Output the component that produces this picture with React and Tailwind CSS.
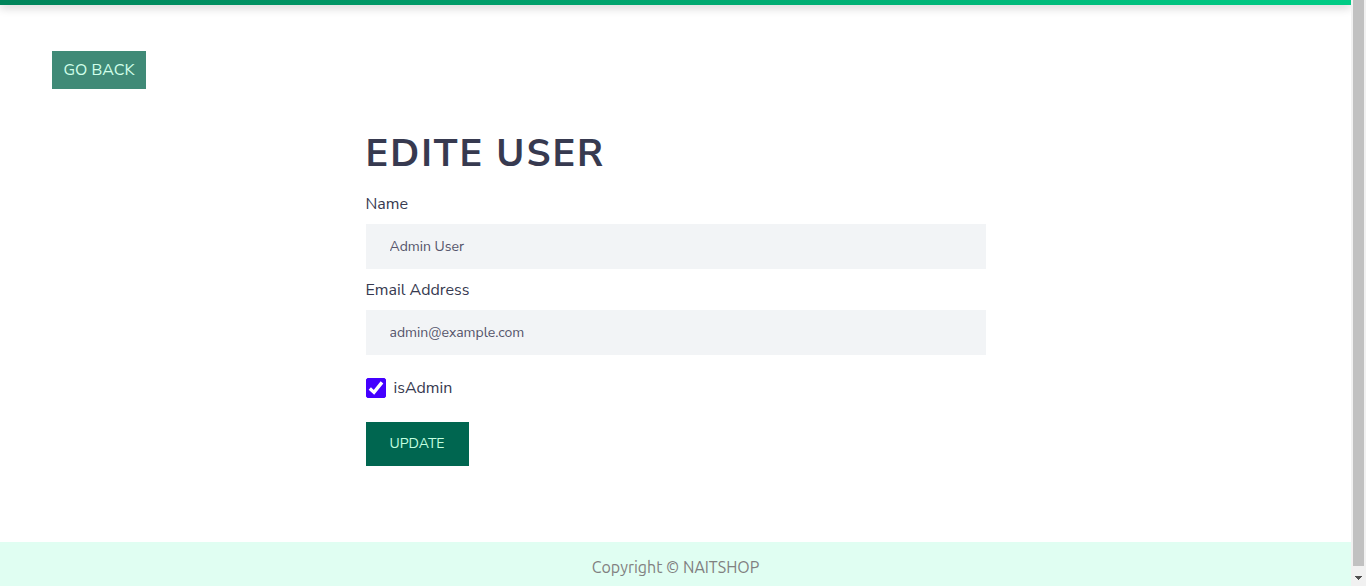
import { useState } from "react";

function Field({ id, label, type, value, onChange }) {
  return (
    <div>
      <label htmlFor={id} className="mb-2 block text-base leading-6">
        {label}
      </label>
      <input
        id={id}
        type={type}
        value={value}
        onChange={(e) => onChange(e.target.value)}
        className="block h-[45px] w-full bg-[#f2f4f6] px-6 text-sm text-[#55556b] outline-none"
      />
    </div>
  );
}

function ScrollTrack() {
  return (
    <div aria-hidden="true" className="sticky top-0 flex h-screen w-[15px] shrink-0 flex-col bg-[#f1f1f1] pl-[2px] pr-[2px]">
      <div className="flex-1 bg-[#c1c1c1]" />
      <div className="flex h-5 items-center justify-center pt-1">
        <svg width="7" height="4" viewBox="0 0 7 4" shapeRendering="crispEdges">
          <path d="M0 0H7V1H6V2H5V3H4V4H3V3H2V2H1V1H0Z" fill="#505050" />
        </svg>
      </div>
    </div>
  );
}

export default function App() {
  const [name, setName] = useState("Admin User");
  const [email, setEmail] = useState("admin@example.com");
  const [isAdmin, setIsAdmin] = useState(true);

  return (
    <div className="flex min-h-screen bg-white font-['Nunito_Sans',Nunito,Lato,sans-serif] text-[#373a50]">
      <div className="flex min-w-0 flex-1 flex-col">
        <header className="h-[5px] bg-linear-to-r from-[#00845a] to-[#00cc85] shadow-[0_2px_10px_rgba(0,0,0,0.25)]" />

        <main className="mx-auto w-full max-w-[1296px] flex-1 px-6 pt-[46px] pb-[72px]">
          <a
            href="#users"
            className="inline-flex h-[38px] items-center bg-[#408a77] px-3 text-base text-[#d0ffea]"
          >
            GO BACK
          </a>

          <section className="mx-auto mt-[41px] w-full max-w-[620px]">
            <h1 className="mb-[14px] text-[38px] leading-[48px] font-bold tracking-[2px]">
              EDITE USER
            </h1>
            <form onSubmit={(e) => e.preventDefault()}>
              <div className="flex flex-col gap-[9px]">
                <Field id="name" label="Name" type="text" value={name} onChange={setName} />
                <Field id="email" label="Email Address" type="email" value={email} onChange={setEmail} />
              </div>
              <div className="mt-[21px] flex items-center gap-2">
                <span className="grid size-5">
                  <input
                    id="isadmin"
                    type="checkbox"
                    checked={isAdmin}
                    onChange={(e) => setIsAdmin(e.target.checked)}
                    className="peer col-start-1 row-start-1 size-5 appearance-none rounded-[2px] border border-[#4400ff] checked:bg-[#4400ff]"
                  />
                  <svg
                    viewBox="0 0 20 20"
                    className="pointer-events-none invisible col-start-1 row-start-1 size-5 peer-checked:visible"
                  >
                    <path d="M3.8 10.6 L8 14.4 L16 4.4" fill="none" stroke="#fff" strokeWidth="3.4" />
                  </svg>
                </span>
                <label htmlFor="isadmin" className="text-base leading-6">
                  isAdmin
                </label>
              </div>
              <button type="submit" className="mt-[22px] h-11 bg-[#006650] px-6 text-sm text-[#c4ffe0]">
                UPDATE
              </button>
            </form>
          </section>
        </main>

        <footer className="flex h-11 items-center justify-center bg-[#e0fef2] pt-1.5 font-['Ubuntu','Noto_Sans',sans-serif] text-base text-[#808080]">
          <p>Copyright © NAITSHOP</p>
        </footer>
      </div>
      <ScrollTrack />
    </div>
  );
}
